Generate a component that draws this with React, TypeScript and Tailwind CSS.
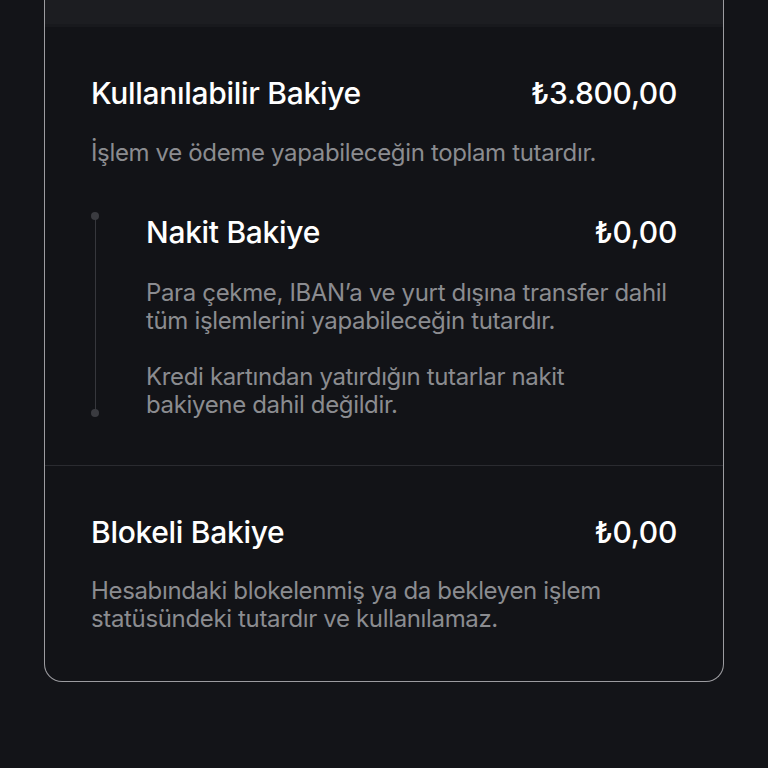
export default function App() {
  const title = "text-[30px] leading-[32px] font-medium tracking-[-0.3px] text-white";
  const body = "text-[24px] leading-[28px] tracking-[-0.35px] text-[#8b8c90]";

  return (
    <div
      className="min-h-[768px] w-full bg-[#131418] px-[44px]"
      style={{ fontFamily: 'Inter, "Noto Sans", sans-serif' }}
    >
      <div className="overflow-hidden rounded-b-[18px] border-x border-b border-[#9c9ca0] bg-[#121317]">
        {/* collapsed header of the sheet */}
        <div className="h-[27px] border-b-[3px] border-[#18191d] bg-[#1c1d21]" />

        <div className="px-[46px] pt-[50px]">
          <div className="flex items-center justify-between">
            <span className={title}>Kullanılabilir Bakiye</span>
            <span className={title}>₺3.800,00</span>
          </div>
          <p className={`mt-[30px] ${body}`}>İşlem ve ödeme yapabileceğin toplam tutardır.</p>

          <div className="mt-[49px] flex">
            {/* timeline rail */}
            <div className="relative w-[8px] shrink-0">
              <div className="absolute left-[3.5px] top-0 bottom-[6px] w-px bg-[#36373c]" />
              <div className="absolute left-0 top-[-4px] h-[8px] w-[8px] rounded-full bg-[#3a3b40]" />
              <div className="absolute left-0 bottom-[2px] h-[8px] w-[8px] rounded-full bg-[#3a3b40]" />
            </div>
            <div className="ml-[47px] flex-1">
              <div className="flex items-center justify-between">
                <span className={title}>Nakit Bakiye</span>
                <span className={title}>₺0,00</span>
              </div>
              <p className={`mt-[31px] ${body}`}>
                Para çekme, IBAN’a ve yurt dışına transfer dahil
                <br />
                tüm işlemlerini yapabileceğin tutardır.
              </p>
              <p className={`mt-[28px] ${body}`}>
                Kredi kartından yatırdığın tutarlar nakit
                <br />
                bakiyene dahil değildir.
              </p>
            </div>
          </div>
        </div>

        <div className="mt-[46px] h-px bg-[#2a2b30]" />

        <div className="px-[46px] pt-[50px] pb-[48px]">
          <div className="flex items-center justify-between">
            <span className={title}>Blokeli Bakiye</span>
            <span className={title}>₺0,00</span>
          </div>
          <p className={`mt-[29px] ${body}`}>
            Hesabındaki blokelenmiş ya da bekleyen işlem
            <br />
            statüsündeki tutardır ve kullanılamaz.
          </p>
        </div>
      </div>
    </div>
  );
}
